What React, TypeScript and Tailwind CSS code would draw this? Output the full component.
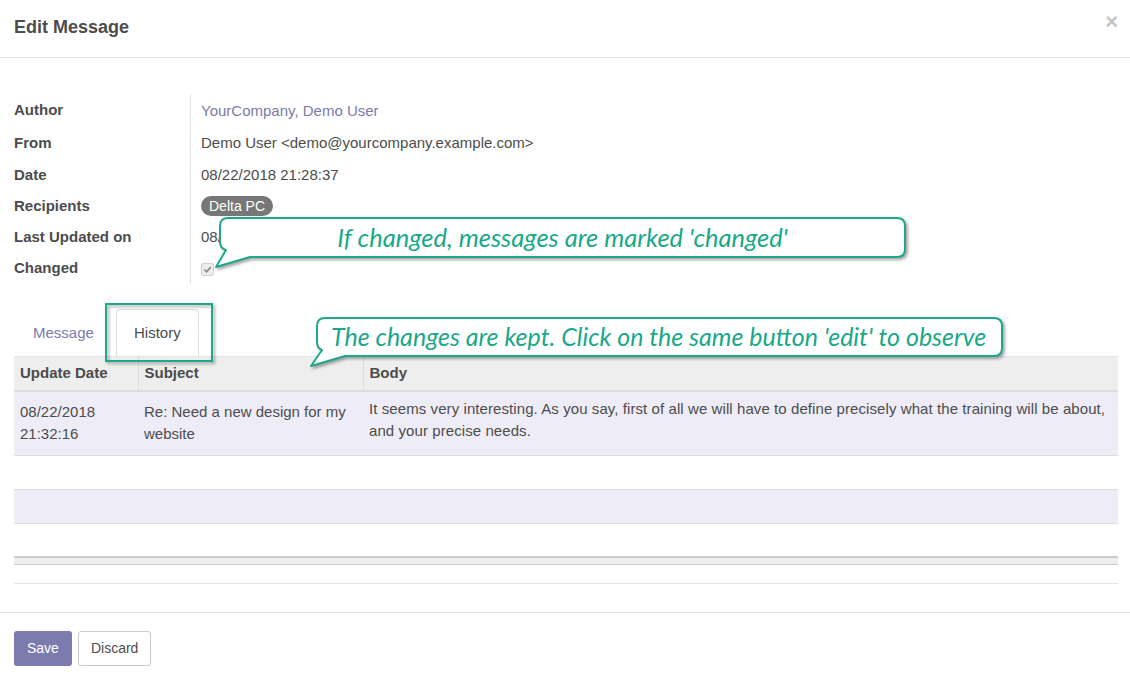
import React from 'react';

const base = { fontFamily: '"Liberation Sans", Arial, sans-serif' };
const callout = { fontFamily: 'Lato, "Open Sans", sans-serif' };

const fields: { label: string; h: string }[] = [
  { label: 'Author', h: 'h-[32px]' },
  { label: 'From', h: 'h-[34px]' },
  { label: 'Date', h: 'h-[31px]' },
  { label: 'Recipients', h: 'h-[30px]' },
  { label: 'Last Updated on', h: 'h-[32px]' },
  { label: 'Changed', h: 'h-[31px]' },
];

const CheckIcon = () => (
  <svg width="9" height="9" viewBox="0 0 10 10">
    <path d="M1.5 5.2 L4 7.6 L8.6 2.4" fill="none" stroke="#8a8a8a" strokeWidth="1.8" />
  </svg>
);

const FieldValue: React.FC<{ label: string }> = ({ label }) => {
  switch (label) {
    case 'Author':
      return <span className="text-[#7c7bad]">YourCompany, Demo User</span>;
    case 'From':
      return <span>Demo User &lt;demo@yourcompany.example.com&gt;</span>;
    case 'Date':
      return <span>08/22/2018 21:28:37</span>;
    case 'Recipients':
      return (
        <span className="inline-flex items-center h-[20px] px-[8px] rounded-full bg-[#777777] text-white text-[14px]">
          Delta PC
        </span>
      );
    case 'Last Updated on':
      return <span>08/22/2018 21:32:16</span>;
    default:
      return (
        <span className="inline-flex items-center justify-center w-[13px] h-[13px] mt-[2px] rounded-[2px] border border-[#cfcfcf] bg-[#ececec]">
          <CheckIcon />
        </span>
      );
  }
};

export default function App() {
  return (
    <div className="relative w-[1130px] h-[678px] bg-white overflow-hidden text-[#4c4c4c]" style={base}>
      {/* header */}
      <div className="h-[58px] border-b border-[#e5e5e5] flex items-center justify-between pl-[14px] pr-[12px]">
        <h4 className="text-[18px] font-bold text-[#4c4c4c] -mt-[3px]">Edit Message</h4>
        <span className="text-[22px] font-bold text-[#c4c4c4] leading-none -mt-[14px]">×</span>
      </div>

      {/* form fields */}
      <div className="pt-[36px] pl-[14px] pr-[12px]">
        <div className="flex">
          <div className="w-[176px] flex flex-col">
            {fields.map(f => (
              <div key={f.label} className={`${f.h} flex items-center text-[15px] font-bold text-[#4c4c4c]`}>
                {f.label}
              </div>
            ))}
          </div>
          <div className="flex flex-col border-l border-[#e0e0e0] pl-[10px]">
            {fields.map(f => (
              <div key={f.label} className={`${f.h} flex items-center text-[15px] ${f.label === 'Author' ? 'pt-[2px]' : ''}`}>
                <FieldValue label={f.label} />
              </div>
            ))}
          </div>
        </div>

        {/* tabs */}
        <div className="mt-[25px] flex items-end h-[47px] pl-[4px]">
          <div className="px-[15px] h-[46px] flex items-center text-[15px] text-[#7c7bad]">Message</div>
          <div className="ml-[7px] w-[83px] h-[47px] flex items-center justify-center text-[15px] text-[#4c4c4c] border border-b-0 border-[#dddddd] rounded-t-[4px] bg-white">
            History
          </div>
        </div>

        {/* table */}
        <table className="w-full border-collapse text-[15px]">
          <thead>
            <tr className="bg-[#eeeeee] h-[34px] border-b-2 border-[#dddddd] border-t border-t-[#e4e4e4]">
              <th className="w-[124px] text-left font-bold px-[6px] border-r border-[#dddddd]">Update Date</th>
              <th className="w-[225px] text-left font-bold px-[6px] border-r border-[#dddddd]">Subject</th>
              <th className="text-left font-bold px-[6px]">Body</th>
            </tr>
          </thead>
          <tbody>
            <tr className="bg-[#eeedf7] h-[65px] border-b border-[#dddddd] align-top">
              <td className="px-[6px] pt-[9px] leading-[22px]">08/22/2018<br />21:32:16</td>
              <td className="px-[6px] pt-[9px] leading-[22px]">Re: Need a new design for my website</td>
              <td className="px-[6px] pt-[6px] leading-[22px] text-[15px] tracking-[0.08px]">
                It seems very interesting. As you say, first of all we will have to define precisely what the training will be about, and your precise needs.
              </td>
            </tr>
            <tr className="h-[34px] border-b border-[#dddddd]"><td colSpan={3}></td></tr>
            <tr className="h-[34px] bg-[#eeedf7] border-b border-[#dddddd]"><td colSpan={3}></td></tr>
            <tr className="h-[33px]"><td colSpan={3}></td></tr>
          </tbody>
          <tfoot>
            <tr className="h-[8px] bg-[#eeeeee] border-t-2 border-[#cccccc] border-b border-b-[#cccccc]"><td colSpan={3}></td></tr>
            <tr className="h-[19px] border-b border-[#e5e5e5]"><td colSpan={3}></td></tr>
          </tfoot>
        </table>
      </div>

      {/* footer */}
      <div className="mt-[28px] border-t border-[#e5e5e5] px-[14px] pt-[18px] flex gap-[6px]">
        <button className="h-[35px] px-[13px] rounded-[3px] bg-[#7c7bad] text-white text-[14px]">Save</button>
        <button className="h-[35px] px-[12px] rounded-[3px] bg-white border border-[#cccccc] text-[#4c4c4c] text-[14px]">Discard</button>
      </div>

      {/* annotation overlay */}
      <svg className="absolute inset-0 pointer-events-none drop-shadow-[2px_2px_1.5px_rgba(0,0,0,0.35)]" width="1130" height="678">
        <path
          d="M228 218 H897 Q905 218 905 226 V249 Q905 257 897 257 H250 L216 267 L226 250 Q220 248 220 242 V226 Q220 218 228 218 Z"
          fill="white" stroke="#1ea88b" strokeWidth="2" strokeLinejoin="round"
        />
        <path
          d="M325 318 H994 Q1002 318 1002 326 V348 Q1002 356 994 356 H345 L311 366 L322 350 Q317 348 317 342 V326 Q317 318 325 318 Z"
          fill="white" stroke="#1ea88b" strokeWidth="2" strokeLinejoin="round"
        />
        <rect x="106" y="304" width="106" height="57" fill="none" stroke="#1ea88b" strokeWidth="2" />
      </svg>
      <div className="absolute left-[221px] top-[219px] w-[683px] h-[37px] flex items-center justify-center italic text-[25.5px] text-[#1aa88a]" style={callout}>
        If changed, messages are marked 'changed'
      </div>
      <div className="absolute left-[318px] top-[319px] w-[683px] h-[36px] flex items-center pl-[13px] italic text-[25px] text-[#1aa88a]" style={callout}>
        The changes are kept. Click on the same button 'edit' to observe
      </div>
    </div>
  );
}
